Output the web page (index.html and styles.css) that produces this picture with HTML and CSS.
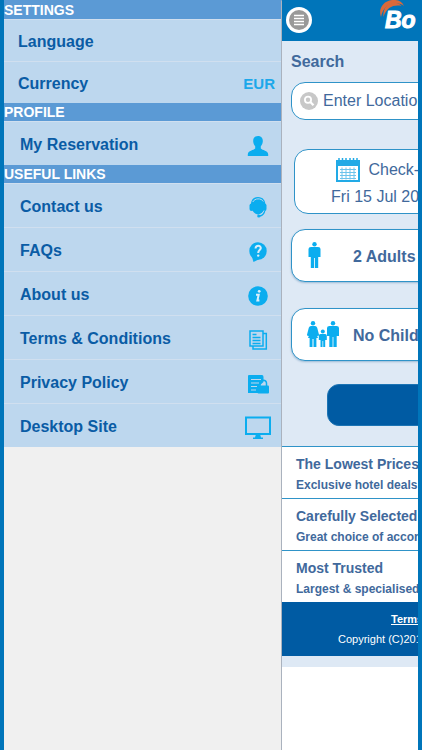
FILE: index.html
```html
<!DOCTYPE html>
<html lang="en">
<head>
  <meta charset="UTF-8" />
  <meta name="viewport" content="width=device-width, initial-scale=1" />
  <title>Hotel Booking</title>
  <link rel="stylesheet" href="styles.css">
</head>
<body>
  <div class="app">
    <nav class="menu">
      <h2>SETTINGS</h2>
      <ul class="settings">
        <li><a href="#">Language</a></li>
        <li><a href="#">Currency <span class="currency">EUR</span></a></li>
      </ul>
      <h2>PROFILE</h2>
      <ul>
        <li><a href="#">My Reservation
          <svg class="icon" viewBox="0 0 28 28"><path d="M14 5c3.500 0 5 2.400 4.800 5.500-.2 2.700-1.300 3.800-2 4.800v2.200c1.500 1.800 7.200 2 7.400 5.700V25H3.800v-1.800c.2-3.700 5.900-3.900 7.400-5.700v-2.200c-.7-1-1.800-2.100-2-4.800C9 7.400 10.500 5 14 5z"/></svg></a></li>
      </ul>
      <h2>USEFUL LINKS</h2>
      <ul>
        <li><a href="#">Contact us
          <svg class="icon" viewBox="0 0 28 28"><path d="M14 4c5 0 7.500 3.500 7.500 8.500 0 4.500-2.800 8.500-6.500 9-4 0-8-4-8-9C6.500 7 9.500 4 14 4z"/><rect x="5.500" y="10.500" width="4" height="7.500" rx="2"/><rect x="18.500" y="10.500" width="4" height="7.500" rx="2"/><path d="M20.800 17c-.5 3.500-2.200 5.500-5 6" class="line"/><circle cx="14.800" cy="23" r="1.600"/><path d="M8.800 9c1.800-4 8.500-4.200 10.500-.5M20 17.500c-1 2.200-2.500 3.500-4.500 4" class="light"/></svg></a></li>
        <li><a href="#">FAQs
          <svg class="icon" viewBox="0 0 28 28"><circle cx="14" cy="14" r="8.700"/><path d="M8 20l1.500 5 6-3z"/><path d="M11.500 11.500c.2-3.700 5.600-3.400 5.300-.3-.2 1.900-2.600 2.100-2.600 4.800" class="mark"/><circle cx="14.200" cy="18.600" r="1.200" class="paper"/></svg></a></li>
        <li><a href="#">About us
          <svg class="icon" viewBox="0 0 28 28"><circle cx="14" cy="15" r="9.800"/><circle cx="15.200" cy="10.300" r="1.400" class="paper"/><path d="M12 13.800h2.700l-1.300 5.600h2" class="mark"/></svg></a></li>
        <li><a href="#">Terms &amp; Conditions
          <svg class="icon" viewBox="0 0 28 28"><path d="M6 6h13v15H6zM19 8.500h3.300V24H9v-3" class="line"/><path d="M8.500 9.500h4M8.500 12.500h8M8.500 15.500h8M8.500 18.500h8" class="line"/></svg></a></li>
        <li><a href="#">Privacy Policy
          <svg class="icon" viewBox="0 0 28 28"><path d="M5 6h13q1.500 0 1.500 2v5L14 18v6H4V7q0-1 1-1z"/><path d="M7 10.500h10M7 14h8M7 17.500h6M7 21h5" class="light"/><path d="M16 17v-2.500c0-4.500 6.500-4.500 6.500 0V17" class="line"/><rect x="13.500" y="16.500" width="11.500" height="8" rx="1"/></svg></a></li>
        <li><a href="#">Desktop Site
          <svg class="icon" viewBox="0 0 28 28"><path d="M2 4.500h24v16.500H2z" class="screen"/><path d="M12 21h4l1 3.500h2V26H9v-1.500h2z"/></svg></a></li>
      </ul>
    </nav>

    <div class="window">
      <div class="page">
        <header>
          <button class="toggle" type="button" aria-label="Menu">
            <svg viewBox="0 0 26 26"><circle cx="13" cy="13" r="13" fill="#fff"/><circle cx="13" cy="13" r="10" fill="#999"/><path d="M8 8.500h10M8 11.500h10M8 14.500h10M8 17.500h10" stroke="#fff" stroke-width="1.500"/></svg>
          </button>
          <div class="logo">
            <svg viewBox="0 0 28 18"><path d="M2 17C-1 9 4 1 13 0c6-.5 10 1.500 12 6C20 1.500 5 1 2 17z"/><path d="M4.500 17C3.500 8 9 3 15 2.800c3-.1 5.500.9 7.500 3.200C15 4.500 7.500 7 4.500 17z"/></svg>
            <span>Bo</span>
          </div>
        </header>

        <form class="search">
          <label for="location">Search</label>
          <div class="field">
            <svg viewBox="0 0 18 18"><circle cx="9" cy="9" r="9" fill="#c8c8c8"/><circle cx="8" cy="7.700" r="3.100" fill="none" stroke="#fff" stroke-width="1.800"/><path d="M10.300 10l3.200 3.300" stroke="#fff" stroke-width="2.200"/></svg>
            <input type="text" id="location" placeholder="Enter Location" />
          </div>
          <button class="date" type="button">
            <span class="date-title">
              <svg viewBox="0 0 24 24"><path d="M1 3h22v20H1z" class="sheet"/><path d="M0 2h24v6H0z"/><path d="M3 0v5M6.500 0v5M10 0v5M14 0v5M17.500 0v5M21 0v5" class="rings"/><path d="M4 11.500h16M4 14.500h16M4 17.500h16M4 20.500h16M6 9.500v12M10 9.500v12M14 9.500v12M18 9.500v12" class="grid"/></svg>
              Check-in
            </span>
            <span>Fri 15 Jul 2016</span>
          </button>
          <button class="guests" type="button">
            <svg viewBox="0 0 32 26"><g id="man"><circle cx="7.500" cy="2.200" r="2.200"/><path d="M4 5h7q2.500 0 2.500 2v8h-2.300v11H7.900V16h-.8v10H3.800V15H1.500V7Q1.500 5 4 5z"/></g></svg>
            2 Adults
          </button>
          <button class="guests" type="button">
            <svg viewBox="0 0 32 26"><circle cx="6" cy="2.200" r="2.200"/><path d="M4 5h4q1.600 0 2.200 1.700l2 7.800-2 .5.800 2H9.400v9H6.500v-8h-1v8H2.600v-9H1l.8-2-2-.5 2-7.800Q2.400 5 4 5z"/><circle cx="15.800" cy="10.500" r="2"/><path d="M13.500 13h4.600q1.700 0 1.700 1.500v4.500H18.200v7h-2v-6h-.7v6h-2v-7h-1.700v-4.500q0-1.500 1.700-1.500z"/><use href="#man" x="18.500"/></svg>
            No Children
          </button>
          <button class="submit" type="submit" aria-label="Search hotels"></button>
        </form>

        <section class="feature">
          <h3>The Lowest Prices</h3>
          <p>Exclusive hotel deals</p>
        </section>
        <section class="feature">
          <h3>Carefully Selected</h3>
          <p>Great choice of accommodation</p>
        </section>
        <section class="feature">
          <h3>Most Trusted</h3>
          <p>Largest &amp; specialised</p>
        </section>

        <footer>
          <a href="#">Terms &amp; Conditions</a>
          <p>Copyright (C)2016</p>
        </footer>
      </div>
    </div>
  </div>
</body>
</html>
```

FILE: styles.css
```css
* {
  box-sizing: border-box;
}
body {
  font-family: "Liberation Sans", Arial, sans-serif;
  font-size: 16px;
  margin: 0;
}
h2, h3, p, ul {
  margin: 0;
  padding: 0;
}
button, input {
  font: inherit;
  color: inherit;
  margin: 0;
}
.app {
  display: flex;
  min-height: 100vh;
  border: solid #0075ba;
  border-width: 0 4px;
}

/* side menu */
.menu {
  flex: 0 0 278px;
  background: #f0f0f0;
  border-top: 1px solid #5b9ad5;
  border-right: 1px solid #aab2be;
}
.menu h2 {
  height: 18px;
  background: #5b9ad5;
  color: white;
  font-size: 14px;
  line-height: 18px;
}
.menu ul {
  list-style: none;
  background: #bdd7ee;
}
.menu li {
  border-top: 1px solid #d0dfef;
}
.menu a {
  display: flex;
  align-items: center;
  justify-content: space-between;
  height: 43px;
  padding: 2px 9px 0 16px;
  color: #0a5ca5;
  font-weight: bold;
  text-decoration: none;
}
.menu .settings a {
  height: 41px;
  padding: 2px 6px 0 14px;
}
.currency {
  color: #1ca8ea;
  font-size: 15px;
}
.icon {
  width: 28px;
  height: 28px;
  fill: #0badef;
}
.icon .line {
  fill: none;
  stroke: #0badef;
  stroke-width: 1.5;
}
.icon .light {
  fill: none;
  stroke: #bdd7ee;
  stroke-width: 1;
}
.icon .mark {
  fill: none;
  stroke: #d9eefb;
  stroke-width: 2;
}
.icon .paper {
  fill: #d9eefb;
}
.icon .screen {
  fill: none;
  stroke: #0badef;
  stroke-width: 2;
}

/* page pushed aside by the menu */
.window {
  flex: 1;
  min-width: 0;
  overflow: hidden;
  background: white;
  color: #41699c;
}
.page {
  width: calc(100vw - 8px);
  border-bottom: 11px solid #dee9f5;
}
header {
  display: flex;
  gap: 66px;
  height: 41px;
  padding: 0 4px;
  background: #0075ba;
}
.toggle {
  width: 26px;
  height: 26px;
  margin-top: 7px;
  padding: 0;
  border: 0;
  background: none;
}
.toggle svg {
  display: block;
}
.logo {
  position: relative;
  padding: 7px 0 0 7px;
  color: white;
  font-size: 23px;
  font-weight: bold;
  font-style: italic;
  line-height: 26px;
  -webkit-text-stroke: 1px white;
}
.logo svg {
  position: absolute;
  top: 0;
  left: 1px;
  width: 28px;
  height: 18px;
  fill: #d9693a;
}
.logo span {
  position: relative;
}
.search {
  display: flex;
  flex-direction: column;
  padding: 12px 9px 20px;
  background: #dee9f5;
}
.search label {
  font-weight: bold;
  line-height: 18px;
}
.field, .date, .guests {
  border: 1px solid #2f93c8;
  border-radius: 14px;
  background: white;
}
.field {
  display: flex;
  align-items: center;
  gap: 5px;
  height: 38px;
  margin-top: 11px;
  padding: 0 8px;
}
.field svg {
  flex: none;
  width: 18px;
  height: 18px;
}
.field input {
  flex: 1;
  padding: 0;
  border: 0;
  background: none;
}
.field input::placeholder {
  color: #41699c;
  opacity: 1;
}
.date {
  display: flex;
  flex-direction: column;
  align-items: center;
  justify-content: center;
  gap: 6px;
  width: 180px;
  height: 65px;
  margin: 29px 0 0 3px;
}
.date-title {
  display: flex;
  align-items: center;
  gap: 8px;
}
.date svg {
  width: 24px;
  height: 24px;
  fill: #22aae6;
}
.date .sheet {
  fill: white;
  stroke: #22aae6;
  stroke-width: 2;
}
.date .rings {
  stroke: #22aae6;
  stroke-width: 1.5;
}
.date .grid {
  stroke: #6cc4ec;
  stroke-width: 1;
}
.guests {
  display: flex;
  align-items: center;
  gap: 14px;
  height: 53px;
  margin-top: 26px;
  padding: 2px 15px 0;
  box-shadow: 0 1px 2px rgba(0,80,140,0.3);
  font-weight: bold;
}
.date + .guests {
  margin-top: 15px;
}
.guests svg {
  width: 32px;
  height: 26px;
  margin-bottom: 4px;
  fill: #0badef;
}
.submit {
  height: 42px;
  margin: 23px 36px 0;
  border: 1px solid #1c74b4;
  border-radius: 12px;
  background: #005ba3;
}
.feature {
  height: 52px;
  padding: 9px 14px 0;
  border-top: 1px solid #2f93c8;
  background: white;
  font-weight: bold;
}
.feature h3 {
  font-size: 14px;
  line-height: 16px;
}
.feature p {
  margin-top: 6px;
  font-size: 12px;
  line-height: 14px;
}
footer {
  height: 54px;
  padding: 10px 56px 0;
  background: #005ba3;
  color: white;
  font-size: 11px;
  line-height: 14px;
}
footer a {
  margin-left: 53px;
  color: white;
  font-weight: bold;
}
footer p {
  margin-top: 6px;
}
```
